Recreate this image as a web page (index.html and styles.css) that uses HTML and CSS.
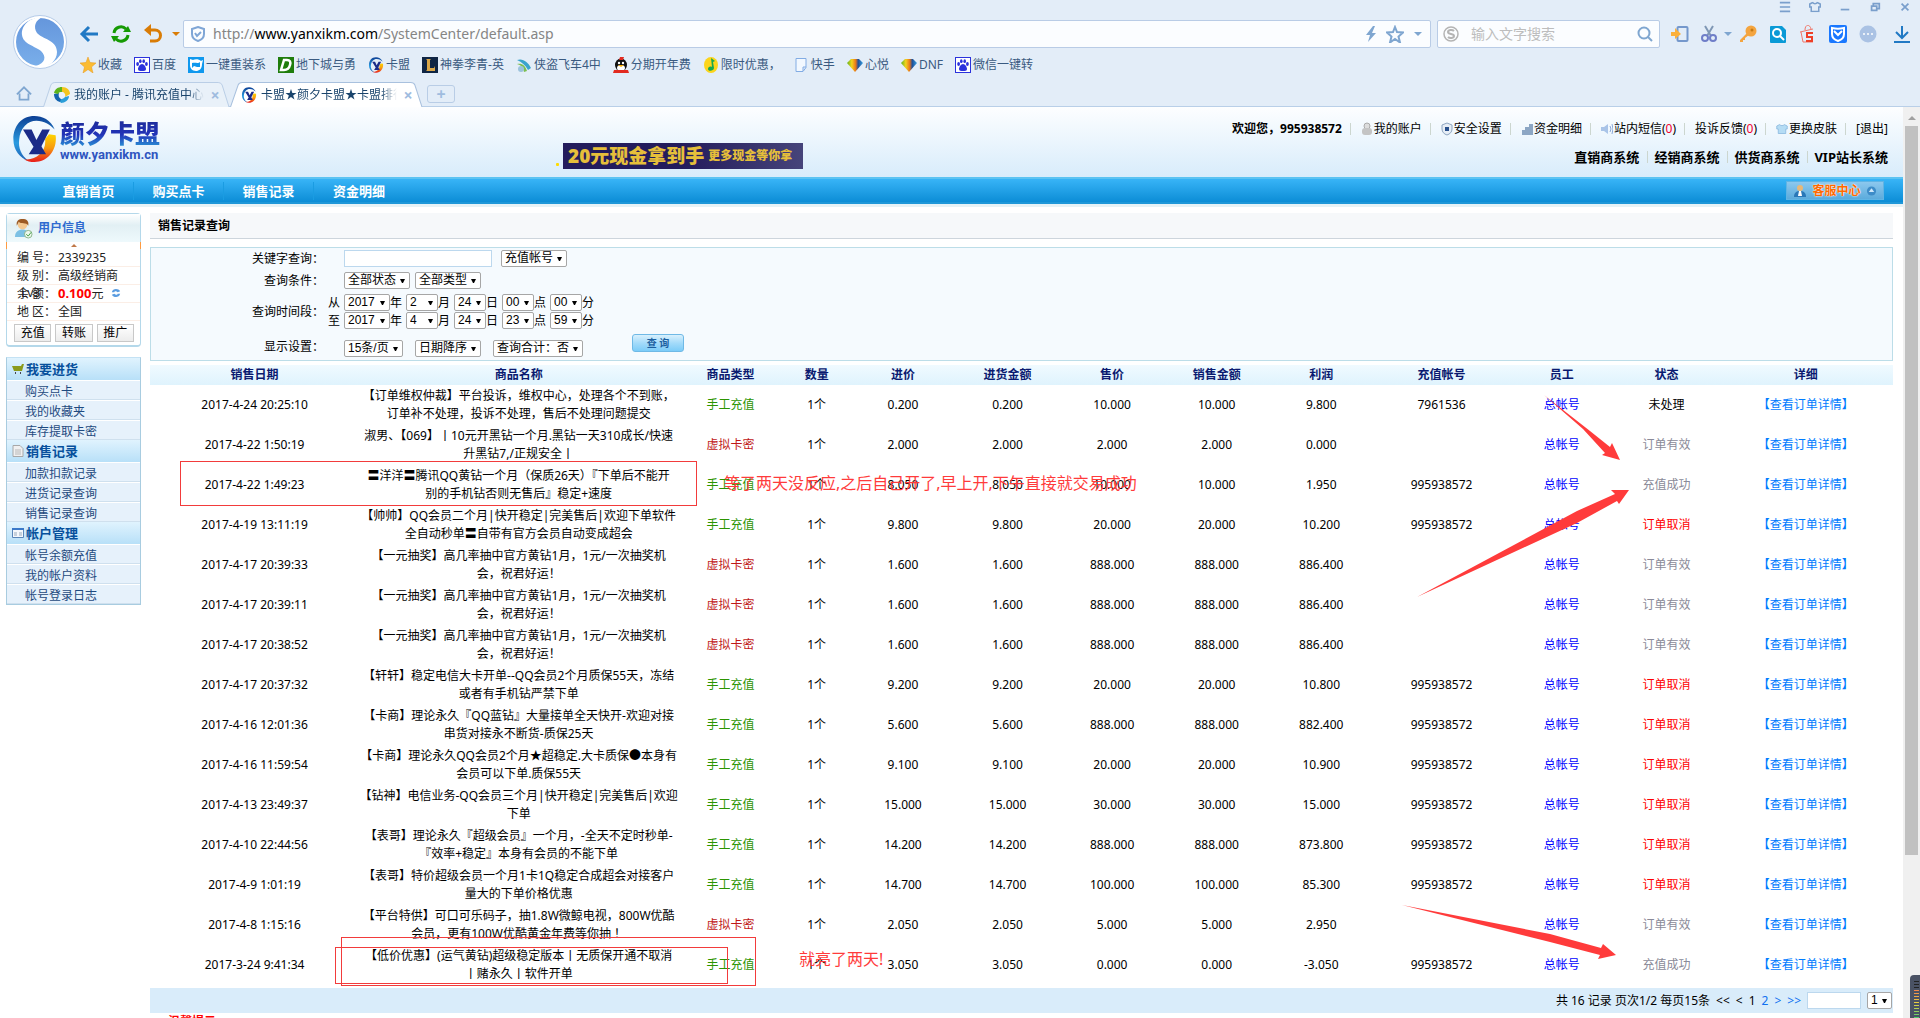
FILE: index.html
```html
<!DOCTYPE html>
<html lang="zh-CN">
<head>
    <title>颜夕卡盟 - 销售记录查询</title>
    <meta charset="utf-8">
    <link rel="stylesheet" href="styles.css">
</head>
<body>

    <!-- Shared icons -->
    <svg class="defs" width="0" height="0">
        <defs>
            <linearGradient id="gem" x1="0" x2="1" y1="0" y2="0">
                <stop offset="0" stop-color="#5cb41c"/><stop offset=".3" stop-color="#f4d21c"/>
                <stop offset=".55" stop-color="#e8741a"/><stop offset=".7" stop-color="#1d4f98"/><stop offset="1" stop-color="#39a0e0"/>
            </linearGradient>
            <linearGradient id="ring" x1="0" x2="0" y1="0" y2="1">
                <stop offset="0" stop-color="#0d3f94"/><stop offset=".6" stop-color="#2a9be0"/><stop offset="1" stop-color="#1d5fb4"/>
            </linearGradient>
            <linearGradient id="flame" x1="0" x2="0" y1="0" y2="1">
                <stop offset="0" stop-color="#ffd500"/><stop offset=".5" stop-color="#f79a10"/><stop offset="1" stop-color="#e81c1c"/>
            </linearGradient>
            <linearGradient id="sogou" x1="0" x2="0" y1="0" y2="1">
                <stop offset="0" stop-color="#6596dc"/><stop offset="1" stop-color="#79aeea"/>
            </linearGradient>
            <symbol id="yx" viewBox="0 0 46 50">
                <path d="M44 15C40 5 31 1 23 1 9 1 1 12 1 25c0 12 7 20 16 23C9 42 6 34 7 26 8 13 16 6 25 6c8 0 14 4 19 9z" fill="url(#ring)"/>
                <path d="M38 20l7 1c2 15-8 28-22 28-4 0-8-1-11-3 12 2 24-8 22-21z" fill="url(#flame)"/>
                <path d="M11 15h9l5 11 6-11h8L26 41h-9l5-8z" fill="#1b2b88"/>
                <path d="M28 29l7 12h-9l-4-6z" fill="#1b2b88"/>
            </symbol>
            <symbol id="paw" viewBox="0 0 16 16">
                <rect x=".5" y=".5" width="15" height="15" fill="#fff" stroke="#2b32dc"/>
                <ellipse cx="3.6" cy="7" rx="1.4" ry="2" fill="#2b32dc"/><ellipse cx="6.3" cy="4.2" rx="1.3" ry="1.9" fill="#2b32dc"/>
                <ellipse cx="9.7" cy="4.2" rx="1.3" ry="1.9" fill="#2b32dc"/><ellipse cx="12.4" cy="7" rx="1.4" ry="2" fill="#2b32dc"/>
                <path d="M8 7c2 0 4 3 4 5s-2 2-4 2-4 0-4-2 2-5 4-5z" fill="#2b32dc"/>
            </symbol>
            <symbol id="diamond" viewBox="0 0 16 16">
                <path d="M4 2h8l4 4-8 9-8-9z" fill="url(#gem)"/>
            </symbol>
            <symbol id="shirt" viewBox="0 0 16 14">
                <path d="M5 1L1 3v4h2v6h10V7h2V3l-4-2c-1 2-5 2-6 0z"/>
            </symbol>
        </defs>
    </svg>

    <!-- Browser bar -->
    <header class="chrome">
        <svg class="browser-logo" viewBox="0 0 54 54">
            <circle cx="27" cy="27" r="26.5" fill="#fff" stroke="#b5cbe8"/>
            <circle cx="27" cy="27" r="24" fill="url(#sogou)"/>
            <path d="M30 2C17 2 8 10 9 20c1 9 13 11 19 16 6 6 4 12-5 15 11 3 21-4 21-14 0-12-15-13-20-19-4-6-2-13 6-16z" fill="#fff"/>
        </svg>
        <div class="chrome-rows">
            <div class="window-controls">
                <button aria-label="菜单"><svg viewBox="0 0 14 14"><path d="M1 2h12M1 7h12M1 12h12" stroke="#7a9fcc" stroke-width="2"/></svg></button>
                <button aria-label="皮肤"><svg viewBox="0 0 16 14" fill="none" stroke="#7a9fcc" stroke-width="2"><use href="#shirt"/></svg></button>
                <button aria-label="最小化"><svg viewBox="0 0 14 14"><path d="M2 10h10" stroke="#7a9fcc" stroke-width="2"/></svg></button>
                <button aria-label="还原"><svg viewBox="0 0 14 14"><path d="M5 5V3h7v6h-2M3 6h6v5H3z" fill="none" stroke="#7a9fcc" stroke-width="2"/></svg></button>
                <button aria-label="关闭"><svg viewBox="0 0 14 14"><path d="M3 3l8 8M11 3l-8 8" stroke="#7a9fcc" stroke-width="2"/></svg></button>
            </div>

            <div class="toolbar">
                <button class="tool" aria-label="后退"><svg viewBox="0 0 20 20"><path d="M19 10H3M10 3l-7 7 7 7" fill="none" stroke="#2179c4" stroke-width="3"/></svg></button>
                <button class="tool" aria-label="刷新"><svg viewBox="0 0 20 20"><path d="M3 9a7 7 0 0 1 12-4M17 11a7 7 0 0 1-12 4" fill="none" stroke="#169a04" stroke-width="3"/><path d="M12 8h8l-3-6zM8 12H0l3 6z" fill="#169a04"/></svg></button>
                <button class="tool" aria-label="撤销"><svg viewBox="0 0 20 20"><path d="M4 6h8a5 5 0 0 1 0 11H7" fill="none" stroke="#d97c06" stroke-width="3"/><path d="M1 6l7-6v12z" fill="#d97c06"/></svg></button>
                <button class="caret orange" aria-label="更多"></button>
                <div class="address">
                    <svg class="i16" viewBox="0 0 16 16"><path d="M8 1l6 2v5c0 4-3 6-6 7-3-1-6-3-6-7V3z" fill="none" stroke="#7fa6d6" stroke-width="2"/><path d="M5 7l2 3 4-4" fill="none" stroke="#7fa6d6" stroke-width="2"/></svg>
                    <span class="url">http://<b>www.yanxikm.com</b>/SystemCenter/default.asp</span>
                    <svg class="i16" viewBox="0 0 16 16"><path d="M10 0L3 9h4l-2 7 8-9H9l3-7z" fill="#7fa6d0"/></svg>
                    <svg class="i18" viewBox="0 0 18 18"><path d="M9 2l2 5 6 .5-4.500 4 1.500 6L9 14l-5 3.500 1.500-6L1 7.500 7 7z" fill="none" stroke="#7fa6d0" stroke-width="2"/></svg>
                    <button class="caret" aria-label="地址列表"></button>
                </div>
                <div class="search">
                    <svg class="i16" viewBox="0 0 16 16"><circle cx="8" cy="8" r="7" fill="none" stroke="#b4b4b4" stroke-width="1.500"/><path d="M11 5C9 3 5 4 5 6c0 3 6 1 6 4 0 2-4 3-6 1" fill="none" stroke="#b4b4b4" stroke-width="2"/></svg>
                    <input type="text" aria-label="搜索" placeholder="输入文字搜索">
                    <svg class="i16" viewBox="0 0 16 16"><circle cx="7" cy="7" r="5.500" fill="none" stroke="#7fa6d0" stroke-width="2"/><path d="M11 11l4 4" stroke="#7fa6d0" stroke-width="2"/></svg>
                </div>
                <div class="extensions">
                    <button aria-label="手机"><svg viewBox="0 0 18 18"><rect x="6.500" y="2" width="10" height="14" rx="1" fill="none" stroke="#7598cc" stroke-width="2"/><path d="M0 7h4V3l6 6-6 5v-3H0z" fill="#fbb03b"/></svg></button>
                    <button class="cut" aria-label="截图"><svg viewBox="0 0 18 18"><path d="M5 1l6 10M13 1L7 11" stroke="#7f97b5" stroke-width="2"/><circle cx="5" cy="13" r="3" fill="none" stroke="#6f7ec8" stroke-width="2"/><circle cx="13" cy="13" r="3" fill="none" stroke="#6f7ec8" stroke-width="2"/></svg></button>
                    <button class="caret" aria-label="截图选项"></button>
                    <button aria-label="密码"><svg viewBox="0 0 18 18"><circle cx="12" cy="6" r="5.500" fill="#f4a540"/><circle cx="13" cy="5" r="1.500" fill="#c77a14"/><path d="M8 8l-7 7v2h3v-2h2v-2l4-3z" fill="#f4a540"/></svg></button>
                    <button aria-label="查找"><svg viewBox="0 0 18 18"><path d="M2 1h11l4 4v12q0 1-1 1H2q-1 0-1-1V2q0-1 1-1z" fill="#0a9ad6"/><circle cx="8" cy="8" r="4" fill="none" stroke="#fff" stroke-width="2"/><path d="M11 11l4 4" stroke="#fff" stroke-width="2"/></svg></button>
                    <button aria-label="购物"><svg viewBox="0 0 18 18"><path d="M1 7l13-3M6 5c0-6 5-6 6-1M2 7l2 10h10" fill="none" stroke="#f0776a"/><path d="M14 8H8v4h5v4H7" fill="none" stroke="#ee3f27" stroke-width="2"/></svg></button>
                    <button aria-label="安全"><svg viewBox="0 0 18 18"><rect width="18" height="18" rx="2" fill="#1a78ff"/><path d="M3 3c4 1 8 1 12 0v6c0 4-3 6-6 7-3-1-6-3-6-7z" fill="none" stroke="#fff" stroke-width="2"/><path d="M5 6l4 4 4-4" fill="none" stroke="#fff" stroke-width="2"/></svg></button>
                    <button aria-label="更多扩展"><svg viewBox="0 0 18 18"><circle cx="9" cy="9" r="8.500" fill="#aac2e4"/><circle cx="5" cy="9" r="1" fill="#fff"/><circle cx="9" cy="9" r="1" fill="#fff"/><circle cx="13" cy="9" r="1" fill="#fff"/></svg></button>
                    <button class="download" aria-label="下载"><svg viewBox="0 0 18 18"><path d="M9 1v12M3 7l6 6 6-6M1 17h16" fill="none" stroke="#2179c4" stroke-width="2"/></svg></button>
                </div>
            </div>

            <nav class="bookmarks">
                <a href="#"><svg viewBox="0 0 16 16"><path d="M8 0l2 5.500 6 .5-4.500 4L13 16l-5-3.500L3 16l1.500-6L0 6l6-.5z" fill="#fbbc34" stroke="#e8961a" stroke-width=".5"/></svg>收藏</a>
                <a href="#"><svg><use href="#paw"/></svg>百度</a>
                <a href="#"><svg viewBox="0 0 16 16"><rect width="16" height="16" fill="#0f98ee"/><path d="M2 2l3 1c2-1 6-1 8 1l2-1-1 4c0 5-3 7-6 7-4 0-6-3-6-6z" fill="#fff"/><path d="M4 6c3-1 6 1 8-1v5H9L6 9l-2 2z" fill="#0f98ee"/></svg>一键重装系</a>
                <a href="#"><svg viewBox="0 0 16 16"><rect width="16" height="16" fill="#1f7d0c"/><path d="M6 3h3c3 0 4 2 3 5-1 4-3 5-6 5H3z" fill="none" stroke="#fff" stroke-width="2.500"/></svg>地下城与勇</a>
                <a href="#"><svg><use href="#yx"/></svg>卡盟</a>
                <a href="#"><svg viewBox="0 0 16 16"><rect width="16" height="16" fill="#0f2544"/><path d="M4 2h5L8 3v8h4l1-2v5H4l1-1V3z" fill="#d9a648"/></svg>神拳李青-英</a>
                <a href="#"><svg viewBox="0 0 16 16"><path d="M1 3c6-2 11 2 14 8l-3 2C9 8 6 5 1 3z" fill="#3aa4cc"/><path d="M1 7c5-1 8 1 10 7l-3 1C7 10 5 8 1 7z" fill="#7dbf50"/><circle cx="5" cy="12" r="3" fill="#9cc3dc"/></svg>侠盗飞车4中</a>
                <a href="#"><svg viewBox="0 0 16 16"><ellipse cx="8" cy="8" rx="6" ry="6.500" fill="#111"/><ellipse cx="8" cy="11" rx="4" ry="3" fill="#fff"/><path d="M1 13h14l1 3H0zM7 0h4l-1 3H6z" fill="#e22a20"/><circle cx="6" cy="6" r="1.200" fill="#fff"/><circle cx="10" cy="6" r="1.200" fill="#fff"/><path d="M5 8h6l-3 2z" fill="#fbb000"/></svg>分期开年费</a>
                <a href="#"><svg viewBox="0 0 16 16"><ellipse cx="8" cy="8" rx="7" ry="8" fill="#fcd51c"/><path d="M8 1l4 3-2 1 1 6c0 3-6 4-6 1 0-2 2-3 4-2z" fill="#18a850"/></svg>限时优惠，</a>
                <a href="#"><svg viewBox="0 0 16 16"><path d="M3 1.500h10v9l-3 4H3zM13 10h-3v4" fill="#f2f8ff" stroke="#82ace4"/></svg>快手</a>
                <a href="#"><svg><use href="#diamond"/></svg>心悦</a>
                <a href="#"><svg><use href="#diamond"/></svg>DNF</a>
                <a href="#"><svg><use href="#paw"/></svg>微信一键转</a>
            </nav>
        </div>

        <div class="tabs">
            <button class="home" aria-label="主页"><svg viewBox="0 0 18 16"><path d="M1 9l8-8 8 8M4 8v7h10V8" fill="none" stroke="#7fa6d0" stroke-width="2"/></svg></button>
            <div class="tab">
                <svg class="shape" viewBox="0 0 190 25" preserveAspectRatio="none"><path d="M.5 25L8 3q1-2.500 4-2.500h166q3 0 4 2.500l7 22" fill="#e9f1f9" stroke="#b9cde6"/></svg>
                <svg class="i16" viewBox="0 0 16 16"><path d="M8 0c5 0 8 3 8 7l-5 3c1-3-1-5-3-5z" fill="#f4c51c"/><path d="M15 9c0 4-4 7-8 7L4 12c4 1 6-1 7-2z" fill="#2b9ed8"/><path d="M6 15C2 14 0 11 0 7l5-1c-1 3 0 5 2 6z" fill="#1464b0"/><path d="M0 6c1-4 4-6 8-6v5C6 5 5 5 4 7z" fill="#5cb41c"/></svg>
                <span class="tab-title">我的账户 - 腾讯充值中心</span>
                <button aria-label="关闭标签">×</button>
            </div>
            <div class="tab active">
                <svg class="shape" viewBox="0 0 190 25" preserveAspectRatio="none"><path d="M.5 25L8 3q1-2.500 4-2.500h166q3 0 4 2.500l7 22" fill="#fff" stroke="#a9c1de"/></svg>
                <svg class="i16"><use href="#yx"/></svg>
                <span class="tab-title">卡盟★颜夕卡盟★卡盟排行</span>
                <button aria-label="关闭标签">×</button>
            </div>
            <button class="new-tab" aria-label="新标签">+</button>
        </div>
    </header>

    <div class="viewport">
        <div class="page">

            <!-- Site header -->
            <header class="site-header">
                <a class="logo" href="#">
                    <svg><use href="#yx"/></svg>
                    <span class="logo-text"><strong>颜夕卡盟</strong><em>www.yanxikm.cn</em></span>
                </a>
                <a class="ad" href="#"><span class="ad-big">20元现金拿到手</span><span class="ad-small">更多现金等你拿</span></a>
                <div class="header-links">
                    <ul class="user-links">
                        <li><b>欢迎您，995938572</b></li>
                        <li><a href="#"><svg viewBox="0 0 12 14"><circle cx="6" cy="4" r="3" fill="#ddd" stroke="#aaa"/><rect x="1" y="6" width="10" height="7" rx="3" fill="#c4c4c4"/></svg>我的账户</a></li>
                        <li><a href="#"><svg viewBox="0 0 12 14"><path d="M6 1l5 2v4c0 3-2 5-5 6-3-1-5-3-5-6V3z" fill="#e6edf5" stroke="#8da5c0"/><rect x="4" y="5" width="4" height="4" fill="#27508c"/></svg>安全设置</a></li>
                        <li><a href="#"><svg viewBox="0 0 12 14"><path d="M1 8h4v5H1zM4 5h4v8H4zM8 2h4v11H8z" fill="#8ca6c4"/></svg>资金明细</a></li>
                        <li><a href="#"><svg viewBox="0 0 12 14"><path d="M0 5h3l4-3v10L3 9H0z" fill="#a9c4e8"/><path d="M9 4q2 3 0 6M11 2q2 5 0 10" fill="none" stroke="#8aa8d8"/></svg>站内短信(<i>0</i>)</a></li>
                        <li><a href="#">投诉反馈(<i>0</i>)</a></li>
                        <li><a href="#"><svg viewBox="0 0 16 14" fill="#b5dcf4" stroke="#84b4dc"><use href="#shirt"/></svg>更换皮肤</a></li>
                        <li><a href="#">[退出]</a></li>
                    </ul>
                    <ul class="system-links">
                        <li><a href="#">直销商系统</a></li>
                        <li><a href="#">经销商系统</a></li>
                        <li><a href="#">供货商系统</a></li>
                        <li><a href="#">VIP站长系统</a></li>
                    </ul>
                </div>
            </header>

            <nav class="main-nav">
                <a href="#">直销首页</a>
                <a href="#">购买点卡</a>
                <a href="#">销售记录</a>
                <a href="#">资金明细</a>
                <button class="service">
                    <svg viewBox="0 0 14 14"><circle cx="7" cy="4" r="3" fill="#e8b878"/><path d="M1 13c0-5 3-6 6-6s6 1 6 6z" fill="#2a78b8"/><path d="M6 7h2l1 5H5z" fill="#fff"/></svg>
                    <span>客服中心</span>
                    <svg class="up" viewBox="0 0 12 12"><circle cx="6" cy="6" r="5" fill="#3d8cc8"/><path d="M3 7l3-4 3 4z" fill="#cfe8fa"/></svg>
                </button>
            </nav>

            <div class="columns">
                <!-- Sidebar -->
                <aside class="sidebar">
                    <section class="user-card">
                        <h2>
                            <svg viewBox="0 0 20 22"><path d="M1 20c0-6 4-8 8-8s7 2 8 8z" fill="#7cc0e4"/><circle cx="9" cy="7" r="5" fill="#f4c890"/><path d="M3 8c-1-5 2-7 6-7s7 2 6 7c-2-4-8-1-10-4z" fill="#9c5a24"/><circle cx="15" cy="17" r="4" fill="#eef8ee" stroke="#8ab48a"/><path d="M13 17l2 2 3-4" fill="none" stroke="#3a9c3a"/></svg>
                            用户信息
                        </h2>
                        <div class="fold"></div>
                        <dl>
                            <div><dt>编 号：</dt><dd>2339235</dd></div>
                            <div><dt>级 别：</dt><dd>高级经销商</dd></div>
                            <div><dt>余 额：<span class="level">Lv3</span></dt><dd><b>0.100</b>元 <svg viewBox="0 0 12 12"><path d="M1 5c1-5 8-5 10-1L8 5C6 3 4 4 4 5zM11 7c-1 5-8 5-10 1l3-1c2 2 4 1 4 0z" fill="#5a9ce0"/></svg></dd></div>
                            <div><dt>地 区：</dt><dd>全国</dd></div>
                        </dl>
                        <div class="card-buttons">
                            <button>充值</button><button>转账</button><button>推广</button>
                        </div>
                    </section>

                    <nav class="menu">
                        <h3><svg viewBox="0 0 12 12"><path d="M0 3h9l1-2h2l-2 7H2z" fill="#8a9a1c"/><path d="M3 10h1M8 10h1" stroke="#445" stroke-width="2"/></svg>我要进货</h3>
                        <a href="#">购买点卡</a>
                        <a href="#">我的收藏夹</a>
                        <a href="#">库存提取卡密</a>
                        <h3><svg viewBox="0 0 12 12"><path d="M1 .5h7l3 3v8H1z" fill="#f0f0f0" stroke="#a8a8a8"/><path d="M3 5h6M3 7h6M3 9h6" stroke="#b8b8b8"/></svg>销售记录</h3>
                        <a href="#">加款扣款记录</a>
                        <a href="#">进货记录查询</a>
                        <a href="#">销售记录查询</a>
                        <h3><svg viewBox="0 0 12 12"><path d="M.5 1.500h11v9H.5z" fill="#f4f8fc" stroke="#5a86b8"/><path d="M0 2h12" stroke="#3a78c8" stroke-width="2"/><path d="M2 6h3M7 6h3M2 8h3M7 8h3" stroke="#9ab"/></svg>帐户管理</h3>
                        <a href="#">帐号余额充值</a>
                        <a href="#">我的帐户资料</a>
                        <a href="#">帐号登录日志</a>
                    </nav>
                </aside>

                <!-- Sales records -->
                <main class="content">
                    <h1>销售记录查询</h1>

                    <form class="filters">
                        <label for="keyword">关键字查询：</label>
                        <div class="fields">
                            <input type="text" id="keyword" class="keyword">
                            <select class="w65" aria-label="关键字类型"><option>充值帐号</option></select>
                        </div>
                        <label for="state">查询条件：</label>
                        <div class="fields narrow">
                            <select class="w65" id="state"><option>全部状态</option></select>
                            <select class="w65" aria-label="类型"><option>全部类型</option></select>
                        </div>
                        <label for="from-year" class="period">查询时间段：</label>
                        <div class="dates">
                            <div class="date">
                                <span class="edge">从</span>
                                <select class="year" id="from-year"><option>2017</option></select><span>年</span>
                                <select aria-label="开始月"><option>2</option></select><span>月</span>
                                <select aria-label="开始日"><option>24</option></select><span>日</span>
                                <select aria-label="开始点"><option>00</option></select><span>点</span>
                                <select aria-label="开始分"><option>00</option></select><span>分</span>
                            </div>
                            <div class="date">
                                <span class="edge">至</span>
                                <select class="year" aria-label="结束年"><option>2017</option></select><span>年</span>
                                <select aria-label="结束月"><option>4</option></select><span>月</span>
                                <select aria-label="结束日"><option>24</option></select><span>日</span>
                                <select aria-label="结束点"><option>23</option></select><span>点</span>
                                <select aria-label="结束分"><option>59</option></select><span>分</span>
                            </div>
                        </div>
                        <label for="per-page" class="display">显示设置：</label>
                        <div class="fields wide">
                            <select class="w59" id="per-page"><option>15条/页</option></select>
                            <select class="w65" aria-label="排序"><option>日期降序</option></select>
                            <select class="w90" aria-label="合计"><option>查询合计：否</option></select>
                            <button type="button" class="query">查 询</button>
                        </div>
                    </form>

                    <table class="records">
                        <colgroup>
                            <col class="c-date"><col class="c-name"><col class="c-num"><col class="c-qty"><col class="c-num"><col class="c-num"><col class="c-num"><col class="c-num"><col class="c-num"><col class="c-account"><col class="c-num"><col class="c-num"><col class="c-detail">
                        </colgroup>
                        <thead>
                            <tr><th>销售日期</th><th>商品名称</th><th>商品类型</th><th>数量</th><th>进价</th><th>进货金额</th><th>售价</th><th>销售金额</th><th>利润</th><th>充值帐号</th><th>员工</th><th>状态</th><th>详细</th></tr>
                        </thead>
                        <tbody>
                            <tr><td>2017-4-24 20:25:10</td><td>【订单维权仲裁】平台投诉，维权中心，处理各个不到账，<br>订单补不处理，投诉不处理，售后不处理问题提交</td><td class="manual">手工充值</td><td>1个</td><td>0.200</td><td>0.200</td><td>10.000</td><td>10.000</td><td>9.800</td><td>7961536</td><td><a class="staff" href="#">总帐号</a></td><td>未处理</td><td><a class="detail" href="#">【查看订单详情】</a></td></tr>
                            <tr><td>2017-4-22 1:50:19</td><td>淑男、【069】丨10元开黑钻一个月.黑钻一天310成长/快速<br>升黑钻7,/正规安全丨</td><td class="card">虚拟卡密</td><td>1个</td><td>2.000</td><td>2.000</td><td>2.000</td><td>2.000</td><td>0.000</td><td></td><td><a class="staff" href="#">总帐号</a></td><td class="done">订单有效</td><td><a class="detail" href="#">【查看订单详情】</a></td></tr>
                            <tr><td>2017-4-22 1:49:23</td><td>〓洋洋〓腾讯QQ黄钻一个月（保质26天）『下单后不能开<br>别的手机钻否则无售后』稳定+速度</td><td class="manual">手工充值</td><td>1个</td><td>8.050</td><td>8.050</td><td>10.000</td><td>10.000</td><td>1.950</td><td>995938572</td><td><a class="staff" href="#">总帐号</a></td><td class="done">充值成功</td><td><a class="detail" href="#">【查看订单详情】</a></td></tr>
                            <tr><td>2017-4-19 13:11:19</td><td>【帅帅】QQ会员二个月|快开稳定|完美售后|欢迎下单软件<br>全自动秒单〓自带有官方会员自动变成超会</td><td class="manual">手工充值</td><td>1个</td><td>9.800</td><td>9.800</td><td>20.000</td><td>20.000</td><td>10.200</td><td>995938572</td><td><a class="staff" href="#">总帐号</a></td><td class="cancelled">订单取消</td><td><a class="detail" href="#">【查看订单详情】</a></td></tr>
                            <tr><td>2017-4-17 20:39:33</td><td>【一元抽奖】高几率抽中官方黄钻1月，1元/一次抽奖机<br>会，祝君好运！</td><td class="card">虚拟卡密</td><td>1个</td><td>1.600</td><td>1.600</td><td>888.000</td><td>888.000</td><td>886.400</td><td></td><td><a class="staff" href="#">总帐号</a></td><td class="done">订单有效</td><td><a class="detail" href="#">【查看订单详情】</a></td></tr>
                            <tr><td>2017-4-17 20:39:11</td><td>【一元抽奖】高几率抽中官方黄钻1月，1元/一次抽奖机<br>会，祝君好运！</td><td class="card">虚拟卡密</td><td>1个</td><td>1.600</td><td>1.600</td><td>888.000</td><td>888.000</td><td>886.400</td><td></td><td><a class="staff" href="#">总帐号</a></td><td class="done">订单有效</td><td><a class="detail" href="#">【查看订单详情】</a></td></tr>
                            <tr><td>2017-4-17 20:38:52</td><td>【一元抽奖】高几率抽中官方黄钻1月，1元/一次抽奖机<br>会，祝君好运！</td><td class="card">虚拟卡密</td><td>1个</td><td>1.600</td><td>1.600</td><td>888.000</td><td>888.000</td><td>886.400</td><td></td><td><a class="staff" href="#">总帐号</a></td><td class="done">订单有效</td><td><a class="detail" href="#">【查看订单详情】</a></td></tr>
                            <tr><td>2017-4-17 20:37:32</td><td>【轩轩】稳定电信大卡开单--QQ会员2个月质保55天，冻结<br>或者有手机钻严禁下单</td><td class="manual">手工充值</td><td>1个</td><td>9.200</td><td>9.200</td><td>20.000</td><td>20.000</td><td>10.800</td><td>995938572</td><td><a class="staff" href="#">总帐号</a></td><td class="cancelled">订单取消</td><td><a class="detail" href="#">【查看订单详情】</a></td></tr>
                            <tr><td>2017-4-16 12:01:36</td><td>【卡商】理论永久『QQ蓝钻』大量接单全天快开-欢迎对接<br>串货对接永不断货-质保25天</td><td class="manual">手工充值</td><td>1个</td><td>5.600</td><td>5.600</td><td>888.000</td><td>888.000</td><td>882.400</td><td>995938572</td><td><a class="staff" href="#">总帐号</a></td><td class="cancelled">订单取消</td><td><a class="detail" href="#">【查看订单详情】</a></td></tr>
                            <tr><td>2017-4-16 11:59:54</td><td>【卡商】理论永久QQ会员2个月★超稳定.大卡质保●本身有<br>会员可以下单.质保55天</td><td class="manual">手工充值</td><td>1个</td><td>9.100</td><td>9.100</td><td>20.000</td><td>20.000</td><td>10.900</td><td>995938572</td><td><a class="staff" href="#">总帐号</a></td><td class="cancelled">订单取消</td><td><a class="detail" href="#">【查看订单详情】</a></td></tr>
                            <tr><td>2017-4-13 23:49:37</td><td>【钻神】电信业务-QQ会员三个月|快开稳定|完美售后|欢迎<br>下单</td><td class="manual">手工充值</td><td>1个</td><td>15.000</td><td>15.000</td><td>30.000</td><td>30.000</td><td>15.000</td><td>995938572</td><td><a class="staff" href="#">总帐号</a></td><td class="cancelled">订单取消</td><td><a class="detail" href="#">【查看订单详情】</a></td></tr>
                            <tr><td>2017-4-10 22:44:56</td><td>【表哥】理论永久『超级会员』一个月，-全天不定时秒单-<br>『效率+稳定』本身有会员的不能下单</td><td class="manual">手工充值</td><td>1个</td><td>14.200</td><td>14.200</td><td>888.000</td><td>888.000</td><td>873.800</td><td>995938572</td><td><a class="staff" href="#">总帐号</a></td><td class="cancelled">订单取消</td><td><a class="detail" href="#">【查看订单详情】</a></td></tr>
                            <tr><td>2017-4-9 1:01:19</td><td>【表哥】特价超级会员一个月1卡1Q稳定合成超会对接客户<br>量大的下单价格优惠</td><td class="manual">手工充值</td><td>1个</td><td>14.700</td><td>14.700</td><td>100.000</td><td>100.000</td><td>85.300</td><td>995938572</td><td><a class="staff" href="#">总帐号</a></td><td class="cancelled">订单取消</td><td><a class="detail" href="#">【查看订单详情】</a></td></tr>
                            <tr><td>2017-4-8 1:15:16</td><td>【平台特供】可口可乐码子，抽1.8W微鲸电视，800W优酷<br>会员，更有100W优酷黄金年费等你抽 ！</td><td class="card">虚拟卡密</td><td>1个</td><td>2.050</td><td>2.050</td><td>5.000</td><td>5.000</td><td>2.950</td><td></td><td><a class="staff" href="#">总帐号</a></td><td class="done">订单有效</td><td><a class="detail" href="#">【查看订单详情】</a></td></tr>
                            <tr><td>2017-3-24 9:41:34</td><td>【低价优惠】(运气黄钻)超级稳定版本丨无质保开通不取消<br>丨赌永久丨软件开单</td><td class="manual">手工充值</td><td>1个</td><td>3.050</td><td>3.050</td><td>0.000</td><td>0.000</td><td>-3.050</td><td>995938572</td><td><a class="staff" href="#">总帐号</a></td><td class="done">充值成功</td><td><a class="detail" href="#">【查看订单详情】</a></td></tr>
                        </tbody>
                    </table>

                    <div class="pager">
                        <span>共 16 记录 页次1/2 每页15条</span>
                        <span>&lt;&lt;</span><span>&lt;</span><span>1</span>
                        <a href="#">2</a><a href="#">&gt;</a><a href="#">&gt;&gt;</a>
                        <input type="text" aria-label="页码">
                        <select aria-label="跳转页"><option>1</option></select>
                    </div>
                    <p class="tip">温馨提示</p>
                </main>
            </div>
        </div>

        <div class="scrollbar">
            <span class="scroll-up"></span>
            <span class="thumb"></span>
        </div>
    </div>

    <!-- Notes drawn over the page -->
    <div class="mark mark-order"></div>
    <div class="mark mark-cheap-outer"></div>
    <div class="mark mark-cheap-inner"></div>
    <p class="note note-wait">等了两天没反应,之后自己开了,早上开,下午直接就交易成功</p>
    <p class="note note-two-days">就亮了两天!</p>
    <svg class="arrows" viewBox="1390 380 260 590">
        <g fill="#ff3b3b">
            <path d="M1544 395L1590 431 1610 447l2-4 8 17-18-5 3-2-22-24z"/>
            <path d="M1417 597L1577 511 1615 494l-4-4h18l-10 14-2-3-40 22z"/>
            <path d="M1402 905L1550 934 1601 948l2-4 13 11-18 4 2-4-50-13z"/>
        </g>
    </svg>
    <div class="meter"><span></span></div>

</body>
</html>
```
FILE: styles.css
```css
* {
    box-sizing: border-box;
}
body {
    margin: 0;
    height: 100vh;
    display: flex;
    flex-direction: column;
    overflow: hidden;
    position: relative;
    background: #fff;
    color: #000;
    font: 12px/18px "Noto Sans", "Noto Sans CJK SC", sans-serif;
}
h1, h2, h3, p, ul, dl, dd {
    margin: 0;
    padding: 0;
}
a {
    color: inherit;
    text-decoration: none;
}
button, input, select {
    font: inherit;
    color: inherit;
    margin: 0;
}
button {
    padding: 0;
    border: none;
    background: none;
}
.defs {
    position: absolute;
}
.i16 {
    width: 16px;
    height: 16px;
    flex: none;
}
.i18 {
    width: 18px;
    height: 18px;
    flex: none;
}

/* Browser bar */
.chrome {
    display: grid;
    grid-template-columns: 73px 1fr;
    flex: none;
    background: #e3edf8;
    border-bottom: 1px solid #b9cfe8;
}
.browser-logo {
    width: 54px;
    height: 54px;
    margin: 15px 0 0 13px;
}
.window-controls {
    display: flex;
    justify-content: flex-end;
    height: 20px;
}
.window-controls button {
    width: 30px;
    height: 18px;
}
.window-controls svg {
    width: 12px;
    height: 12px;
}
.toolbar {
    display: flex;
    align-items: center;
    height: 28px;
}
.tool {
    width: 32px;
    height: 28px;
    display: flex;
    align-items: center;
    justify-content: center;
}
.tool svg {
    width: 20px;
    height: 20px;
}
.caret {
    width: 14px;
    height: 14px;
    display: flex;
    align-items: center;
    justify-content: center;
}
.caret::after {
    content: "";
    border: 4px solid transparent;
    border-top-color: #7fa6d0;
    border-bottom: none;
}
.caret.orange::after {
    border-top-color: #d97c06;
}
.address, .search {
    display: flex;
    align-items: center;
    height: 28px;
    background: #fbfdff;
    border: 1px solid #b9cce6;
    border-radius: 2px;
}
.address {
    flex: 1;
    gap: 7px;
    padding: 0 5px 0 6px;
    margin-right: 6px;
}
.url {
    flex: 1;
    font-size: 14px;
    color: #858585;
}
.url b {
    font-weight: normal;
    color: #000;
}
.search {
    width: 223px;
    padding: 0 6px 0 5px;
}
.search input {
    flex: 1;
    min-width: 0;
    border: none;
    background: none;
    padding: 0 12px;
    font-size: 14px;
}
.search input::placeholder {
    color: #bdbdbd;
}
.extensions {
    display: flex;
    align-items: center;
    margin-left: 5px;
}
.extensions button {
    width: 30px;
    height: 18px;
}
.extensions svg {
    width: 18px;
    height: 18px;
}
.extensions .cut {
    width: 28px;
}
.extensions .caret {
    width: 10px;
}
.extensions .download {
    width: 37px;
}
.bookmarks {
    display: flex;
    align-items: center;
    gap: 12px;
    height: 34px;
    padding-left: 7px;
    color: #3a5a80;
}
.bookmarks a {
    display: flex;
    align-items: center;
    gap: 2px;
}
.bookmarks svg {
    width: 16px;
    height: 16px;
}
.tabs {
    grid-column: 1 / -1;
    display: flex;
    height: 24px;
}
.home {
    width: 43px;
    padding: 4px 0 0 5px;
}
.home svg {
    width: 16px;
    height: 15px;
}
.tab {
    position: relative;
    display: flex;
    align-items: center;
    gap: 4px;
    width: 187px;
    height: 25px;
    padding: 0 8px 0 11px;
    color: #1a446c;
}
.tab.active {
    width: 193px;
}
.tab .shape {
    position: absolute;
    left: 0;
    top: 0;
    width: 100%;
    height: 100%;
}
.tab .i16, .tab-title, .tab button {
    position: relative;
}
.tab-title {
    flex: 1;
    overflow: hidden;
    white-space: nowrap;
    -webkit-mask-image: linear-gradient(90deg, #000 88%, transparent);
    mask-image: linear-gradient(90deg, #000 88%, transparent);
}
.tab button {
    width: 14px;
    font-size: 16px;
    font-weight: bold;
    color: #9fbcdf;
}
.new-tab {
    width: 28px;
    height: 18px;
    margin: 3px 0 0 4px;
    border: 1px solid #b9cde6;
    border-radius: 3px;
    font-size: 16px;
    line-height: 16px;
    font-weight: bold;
    color: #9fbcdf;
}

/* Page area */
.viewport {
    display: flex;
    flex: 1;
    min-height: 0;
}
.page {
    flex: 1;
    min-width: 0;
    overflow: hidden;
}
.scrollbar {
    width: 17px;
    display: flex;
    flex-direction: column;
    align-items: center;
    background: #f0f0f0;
}
.scroll-up {
    margin: 9px 0 6px;
    border: 4px solid transparent;
    border-top: none;
    border-bottom-color: #a0a0a0;
}
.thumb {
    width: 13px;
    height: 80%;
    background: #c1c1c1;
}

/* Site header */
.site-header {
    display: grid;
    grid-template-columns: 563px auto 1fr;
    height: 70px;
    background: linear-gradient(#fdfeff, #d8ecfb);
}
.logo {
    display: flex;
    gap: 3px;
    padding: 8px 0 0 12px;
}
.logo svg {
    width: 45px;
    height: 48px;
}
.logo-text {
    padding-top: 3px;
}
.logo-text strong {
    display: block;
    font-size: 25px;
    line-height: 30px;
    font-weight: 900;
    color: transparent;
    background: linear-gradient(#1c2a94, #2233b8 55%, #2a9bd8);
    -webkit-background-clip: text;
    background-clip: text;
}
.logo-text em {
    display: block;
    font: bold 13px/13px Roboto, sans-serif;
    color: #2f55c0;
}
.ad {
    position: relative;
    display: flex;
    align-items: center;
    align-self: end;
    gap: 4px;
    width: 240px;
    height: 26px;
    margin-bottom: 8px;
    padding-left: 5px;
    white-space: nowrap;
    background: linear-gradient(90deg, #231c5c 50%, #46447a);
    color: #e6bf3a;
    font-weight: 900;
}
.ad::before {
    content: "";
    position: absolute;
    left: -7px;
    bottom: 3px;
    width: 3px;
    height: 3px;
    border-radius: 1px;
    background: #ffdc00;
}
.ad-big {
    font-size: 19px;
}
.ad-small {
    font-size: 12px;
}
.header-links {
    padding: 13px 15px 0 0;
}
.header-links ul {
    display: flex;
    justify-content: flex-end;
    list-style: none;
    white-space: nowrap;
}
.header-links li {
    display: flex;
    align-items: center;
}
.header-links li + li::before {
    content: "";
    width: 1px;
    height: 12px;
    margin: 0 10px 0 8px;
    background: #ccd6cf;
}
.header-links a {
    display: flex;
    align-items: center;
}
.header-links svg {
    width: 12px;
    height: 14px;
    margin-right: 1px;
}
.header-links i {
    font-style: normal;
    color: #f00030;
}
.header-links .system-links {
    padding-top: 10px;
    font-size: 13px;
    font-weight: bold;
}
.header-links .system-links li + li::before {
    margin: 0 6px 0 8px;
}
.main-nav {
    display: flex;
    align-items: center;
    height: 27px;
    padding: 0 19px 0 44px;
    border-top: 2px solid #5cc3f2;
    border-bottom: 2px solid #1f97d8;
    background: linear-gradient(#38b4f7, #0c8dd6);
    color: #fff;
    font-size: 13px;
    font-weight: bold;
}
.main-nav > a {
    width: 90px;
    text-align: center;
    border-right: 1px solid #1a9ce2;
}
.main-nav > a:nth-child(4) {
    border-right: none;
}
.service {
    display: flex;
    align-items: center;
    justify-content: center;
    gap: 5px;
    width: 98px;
    height: 19px;
    margin-left: auto;
    border: 1px solid #5fb4e4;
    background: linear-gradient(#8cc8ee, #5cabdc);
    font-size: 12px;
}
.service span {
    color: #ff6a00;
    text-shadow: 0 0 1px #fff, 0 0 2px #fff;
}
.service svg {
    width: 14px;
    height: 14px;
}
.service .up {
    width: 11px;
}

/* Columns */
.columns {
    display: grid;
    grid-template-columns: 135px 1fr;
    gap: 9px;
    padding: 6px 10px 0 6px;
    border-top: 3px solid #e6f2f6;
}
.user-card {
    height: 134px;
    margin-bottom: 10px;
    border: 1px solid #b4d8ea;
    border-bottom-width: 2px;
    border-radius: 4px;
}
.user-card h2 {
    display: flex;
    align-items: center;
    gap: 5px;
    height: 28px;
    padding-left: 7px;
    font-size: 12px;
    color: #2f6bd0;
    background: linear-gradient(#fff, #e2f0f4 40%, #eef9fc);
}
.user-card h2 svg {
    width: 19px;
    height: 21px;
}
.fold {
    display: flex;
    justify-content: center;
    height: 7px;
    margin: 0 -1px;
    padding-top: 2px;
    border: 1px solid #ff9a40;
    border-width: 0 1px;
}
.fold::after {
    content: "";
    width: 0;
    height: 0;
    border: 3px solid transparent;
    border-top: none;
    border-bottom-color: #c07848;
}
.user-card dl div {
    display: flex;
    height: 18px;
    line-height: 17px;
    border-bottom: 1px solid #fbeee6;
}
.user-card dt {
    position: relative;
    width: 51px;
    padding-left: 10px;
    white-space: nowrap;
    color: #222;
}
.user-card dd {
    white-space: nowrap;
    color: #222;
}
.user-card dd b {
    color: #f00;
    font-size: 13px;
}
.user-card dd svg {
    width: 10px;
    height: 10px;
    margin-left: 4px;
}
.level {
    position: absolute;
    left: 14px;
    top: -1px;
}
.card-buttons {
    display: flex;
    gap: 4px;
    padding: 3px 6px 0 7px;
}
.card-buttons button {
    flex: 1;
    height: 18px;
    border: 1px solid #c8c8c8;
    background: linear-gradient(#fff, #ececec);
    line-height: 16px;
}
.menu {
    border: 1px solid #a8cce0;
    border-top-color: #c4e2f4;
}
.menu h3 {
    display: flex;
    align-items: center;
    gap: 2px;
    height: 22px;
    padding-left: 5px;
    font-size: 13px;
    color: #07509c;
    background: linear-gradient(#e0f3fe, #b8e0f8);
}
.menu h3 svg {
    width: 12px;
    height: 12px;
}
.menu a {
    display: block;
    height: 20px;
    padding-left: 18px;
    line-height: 21px;
    border-top: 1px solid #fff;
    border-bottom: 1px solid #cfe0ee;
    background: #e6f1fb;
    color: #1f4a80;
}
.content {
    min-width: 0;
}
.content h1 {
    height: 26px;
    margin-bottom: 8px;
    padding-left: 8px;
    border-bottom: 1px solid #cdd5dc;
    background: #f6f8fa;
    font-size: 12px;
    line-height: 25px;
}

/* Filters */
.filters {
    display: grid;
    grid-template-columns: 177px 1fr;
    row-gap: 5px;
    padding: 2px 0 3px;
    border: 1px solid #bcdde8;
    background: #f5fafe;
}
.filters label {
    padding-right: 4px;
    text-align: right;
    line-height: 17px;
}
.filters .period {
    line-height: 35px;
}
.filters .display {
    margin-top: 4px;
}
.fields {
    display: flex;
    gap: 9px;
    height: 17px;
    padding-left: 16px;
}
.fields.narrow {
    gap: 5px;
}
.fields.wide {
    gap: 12px;
    margin-top: 6px;
}
.dates {
    display: grid;
    row-gap: 1px;
}
.date {
    display: flex;
    height: 17px;
    line-height: 17px;
}
.date span {
    width: 16px;
}
select {
    width: 32px;
    height: 17px;
    padding: 0 10px 0 3px;
    appearance: none;
    border: 1px solid #a6a6a6;
    border-radius: 2px;
    background: #fff url("data:image/svg+xml,%3Csvg xmlns='http://www.w3.org/2000/svg' width='5' height='4'%3E%3Cpath d='M0 0h5L3 4H2z'/%3E%3C/svg%3E") no-repeat right 4px center;
    font: 12px/15px "Liberation Sans", "Noto Sans CJK SC", sans-serif;
}
select.year {
    width: 46px;
}
.w59 {
    width: 59px;
}
.w65 {
    width: 66px;
}
.w90 {
    width: 90px;
}
input.keyword {
    width: 148px;
    height: 17px;
    border: 1px solid #bcd8ee;
}
.query {
    width: 52px;
    height: 18px;
    margin: -6px 0 0 37px;
    border: 1px solid #6fb9e6;
    border-radius: 3px;
    background: linear-gradient(#d8f0fd, #a4dbfa 50%, #7cccf8);
    color: #1c5fa0;
    font-size: 10px;
    font-weight: bold;
    line-height: 15px;
}

/* Records */
.records {
    width: 100%;
    margin-top: 4px;
    table-layout: fixed;
    border-collapse: collapse;
    text-align: center;
    white-space: nowrap;
}
.c-date {
    width: 12%;
}
.c-name {
    width: 18.3%;
}
.c-qty {
    width: 3.9%;
}
.c-num {
    width: 6%;
}
.c-account {
    width: 7.8%;
}
.c-detail {
    width: 10%;
}
.records th {
    height: 20px;
    padding: 0;
    background: linear-gradient(#f0faff, #dff3fd);
    color: #0a1a70;
    line-height: 20px;
}
.records td {
    height: 40px;
    padding: 0;
}
.manual {
    color: #2c9400;
}
.card {
    color: #c01818;
}
.done {
    color: #8a8a98;
}
.cancelled {
    color: #f00;
}
.staff {
    color: #00f;
}
.detail {
    color: #007bff;
}
.pager {
    display: flex;
    align-items: center;
    justify-content: flex-end;
    gap: 6px;
    height: 25px;
    margin-top: 3px;
    padding-right: 1px;
    background: #d9ecfa;
}
.pager a {
    color: #1070f0;
}
.pager input {
    width: 54px;
    height: 17px;
    border: 1px solid #bcd8ee;
}
.pager select {
    width: 25px;
}
.tip {
    padding-left: 18px;
    color: #f00;
    font-weight: bold;
}

/* Notes drawn over the page */
.mark {
    position: absolute;
    border: 1px solid #f23b3b;
}
.mark-order {
    left: 180px;
    top: 461px;
    width: 517px;
    height: 45px;
}
.mark-cheap-outer {
    left: 341px;
    top: 937px;
    width: 415px;
    height: 49px;
}
.mark-cheap-inner {
    left: 335px;
    top: 947px;
    width: 393px;
    height: 37px;
}
.note {
    position: absolute;
    color: #ff3b3b;
    font-size: 16px;
    line-height: 20px;
    white-space: nowrap;
}
.note-wait {
    left: 724px;
    top: 473px;
}
.note-two-days {
    left: 799px;
    top: 949px;
}
.arrows {
    position: absolute;
    left: 1390px;
    top: 380px;
    width: 260px;
    height: 590px;
    pointer-events: none;
}
.meter {
    position: absolute;
    right: 0;
    bottom: 0;
    width: 10px;
    height: 43px;
    padding: 6px 1px 0 4px;
    border-radius: 4px 0 0 0;
    background: #4a5264;
}
.meter span {
    display: block;
    height: 37px;
    background: repeating-linear-gradient(transparent 0 1px, #4a5264 1px 3px), linear-gradient(#222 18%, #f07850 18%, #e8d040 60%, #50d070);
}
```
